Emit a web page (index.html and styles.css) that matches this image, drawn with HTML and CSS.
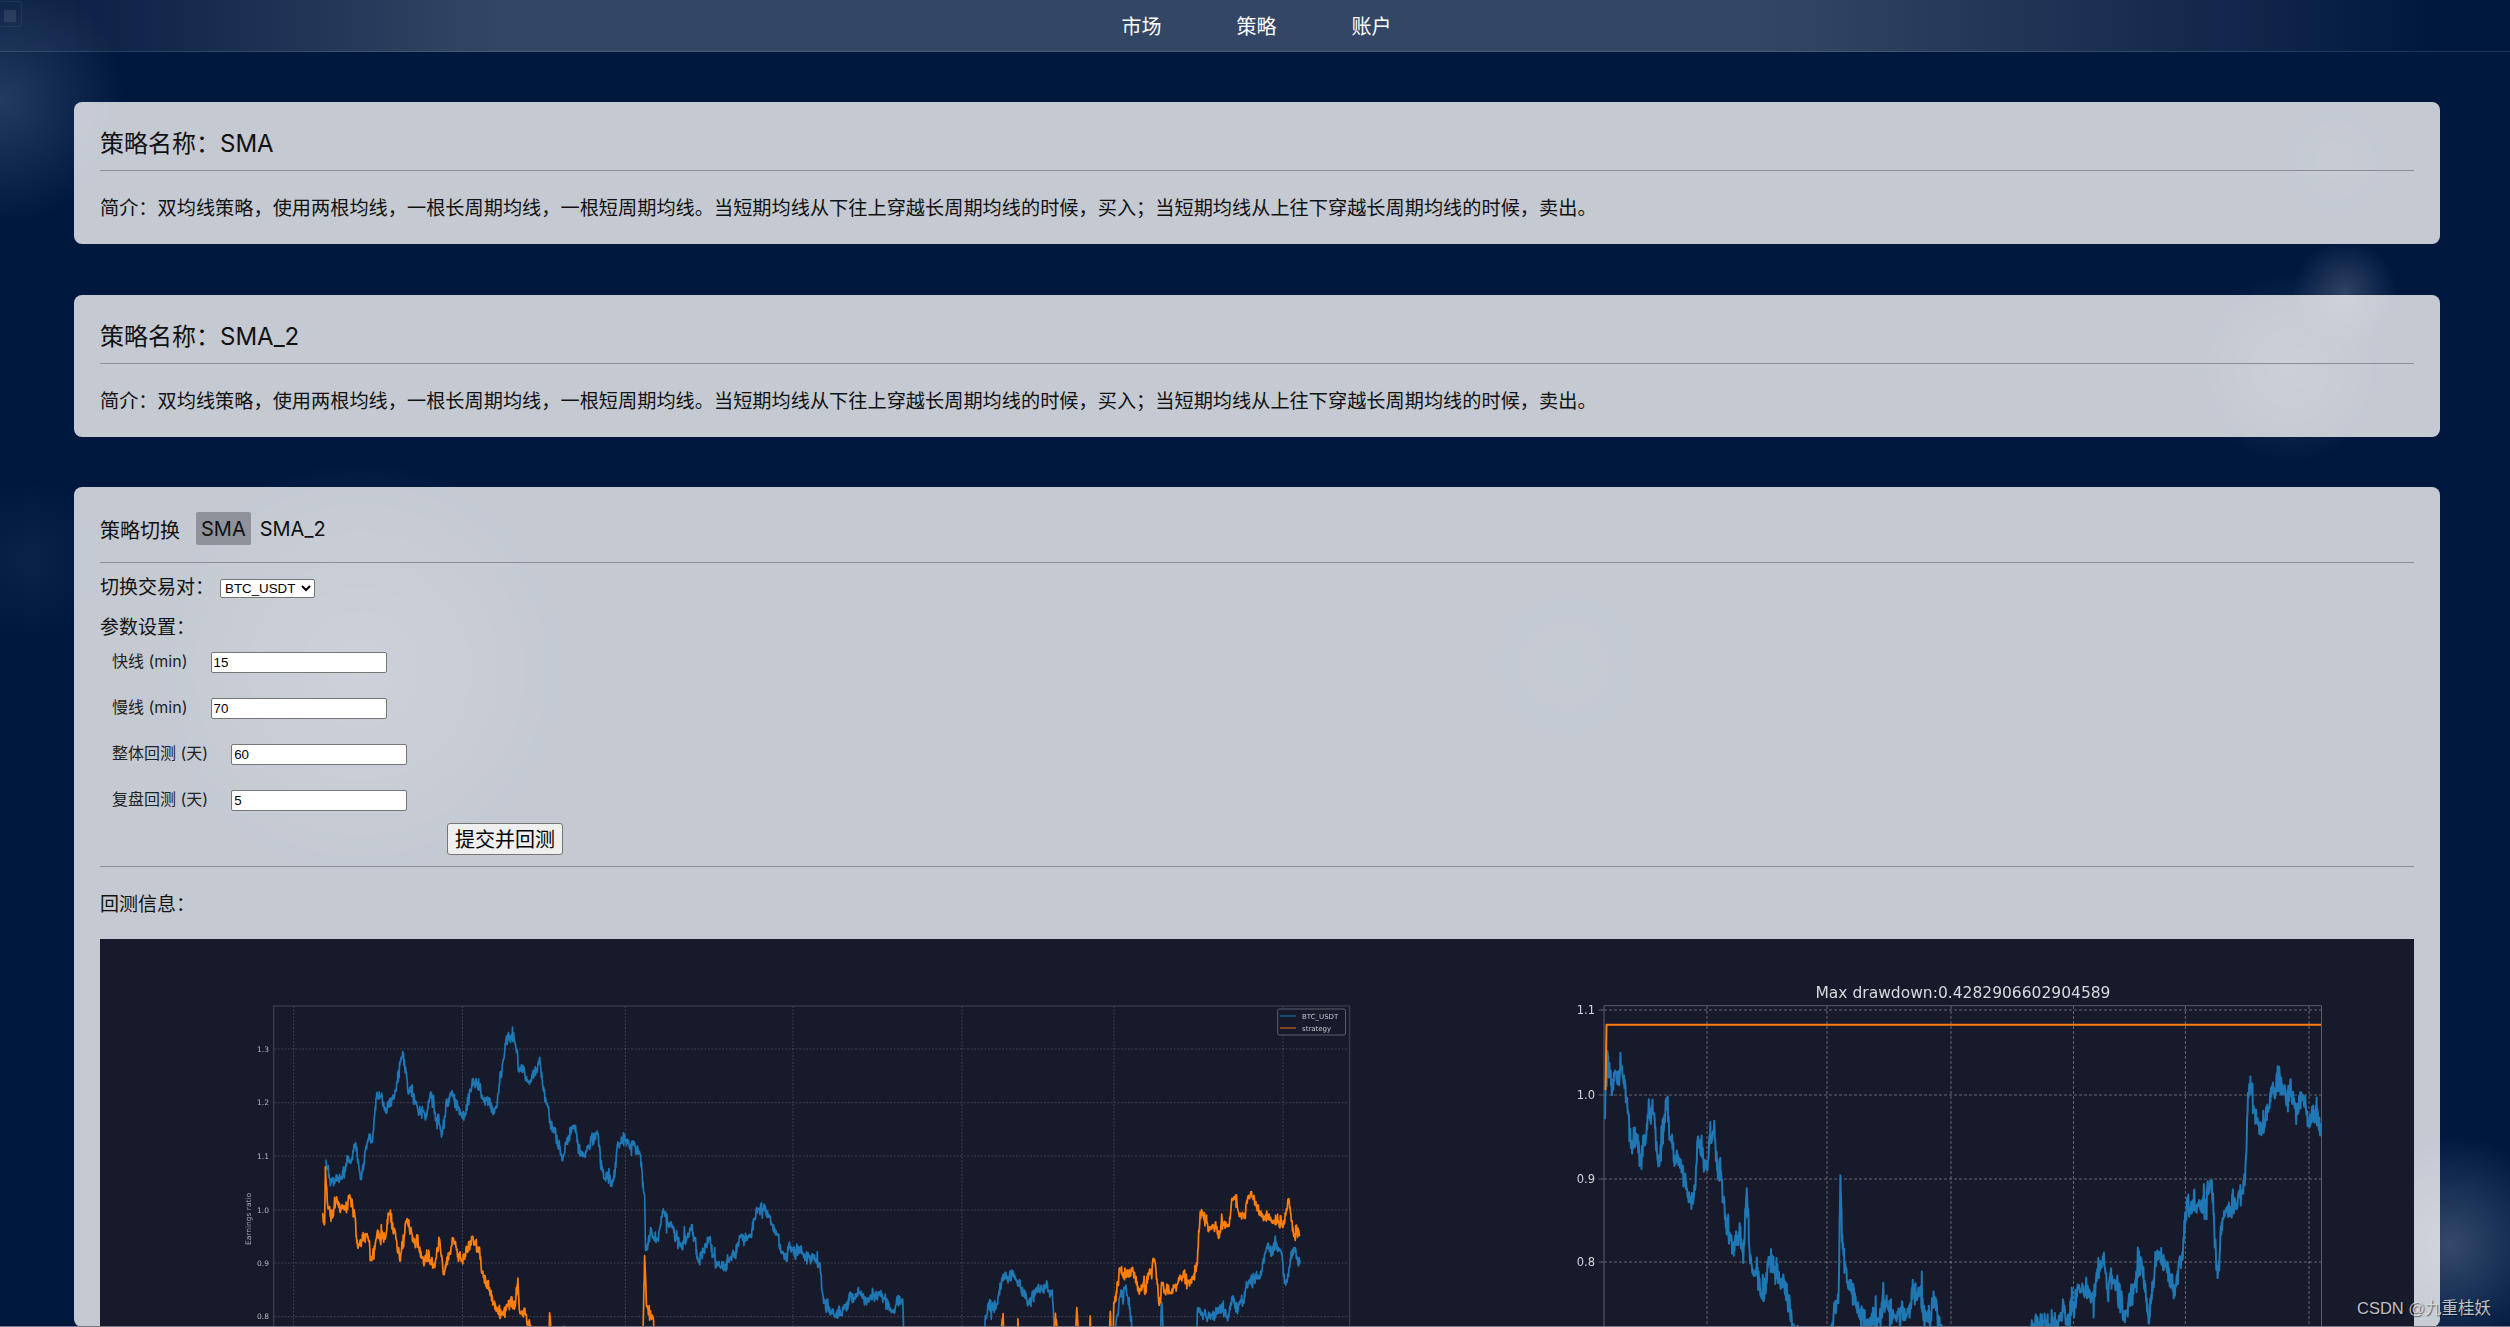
FILE: index.html
```html
<!DOCTYPE html>
<html lang="zh-CN">
<head>
<meta charset="utf-8">
<title>策略</title>
<link rel="stylesheet" href="styles.css">
</head>
<body>
<div class="page-mark"><span class="page-mark-dot"></span></div>
<nav class="topnav">
  <a class="topnav-item">市场</a>
  <a class="topnav-item">策略</a>
  <a class="topnav-item">账户</a>
</nav>
<main class="content">
  <section class="card info-card">
    <h3 class="card-title">策略名称：SMA</h3>
    <hr class="rule rule-info">
    <p class="card-text">简介：双均线策略，使用两根均线，一根长周期均线，一根短周期均线。当短期均线从下往上穿越长周期均线的时候，买入；当短期均线从上往下穿越长周期均线的时候，卖出。</p>
  </section>
  <section class="card info-card">
    <h3 class="card-title">策略名称：SMA_2</h3>
    <hr class="rule rule-info">
    <p class="card-text">简介：双均线策略，使用两根均线，一根长周期均线，一根短周期均线。当短期均线从下往上穿越长周期均线的时候，买入；当短期均线从上往下穿越长周期均线的时候，卖出。</p>
  </section>
  <section class="card run-card">
    <div class="tabs">
      <span class="tabs-label">策略切换</span>
      <span class="tab tab-active">SMA</span>
      <span class="tab">SMA_2</span>
    </div>
    <hr class="rule rule-tabs">
    <div class="pair-row">
      <label class="field-title">切换交易对：</label>
      <select class="pair-select"><option>BTC_USDT</option></select>
    </div>
    <div class="field-title params-title">参数设置：</div>
    <div class="param-list">
      <div class="param-row"><label class="param-label">快线 (min)</label><input class="param-input" value="15"></div>
      <div class="param-row"><label class="param-label">慢线 (min)</label><input class="param-input" value="70"></div>
      <div class="param-row"><label class="param-label">整体回测 (天)</label><input class="param-input" value="60"></div>
      <div class="param-row"><label class="param-label">复盘回测 (天)</label><input class="param-input" value="5"></div>
    </div>
    <div class="submit-row"><button class="submit-btn">提交并回测</button></div>
    <hr class="rule rule-submit">
    <div class="field-title result-title">回测信息：</div>
    <div class="chart-panel">
      <svg class="charts" viewBox="100 939 2308 388" width="2308" height="388" xmlns="http://www.w3.org/2000/svg">
        <g class="grid-left">
          <path d="M274 1049H1350M274 1102.7H1350M274 1156H1350M274 1210H1350M274 1263H1350M274 1316.7H1350"/>
          <path d="M293.7 1006V1340M462.5 1006V1340M625.4 1006V1340M793 1006V1340M962 1006V1340M1114 1006V1340M1283 1006V1340"/>
        </g>
        <path class="axes-left" d="M273.7 1340V1006H1349.6V1340"/>
        <g class="ticks-left">
          <text x="269" y="1051.5">1.3</text>
          <text x="269" y="1105">1.2</text>
          <text x="269" y="1158.5">1.1</text>
          <text x="269" y="1212.5">1.0</text>
          <text x="269" y="1265.5">0.9</text>
          <text x="269" y="1319">0.8</text>
        </g>
        <text class="ylabel" transform="translate(250.5 1219) rotate(-90)">Earnings ratio</text>
        <polyline id="line-left-blue" class="series series-blue"/>
        <polyline id="line-left-orange" class="series series-orange"/>
        <rect class="legend-box" x="1277.7" y="1009" width="67.8" height="26" rx="1.5"/>
        <path class="legend-blue" d="M1280 1016H1296"/>
        <path class="legend-orange" d="M1280 1028H1296"/>
        <text class="legend-text" x="1302" y="1018.5">BTC_USDT</text>
        <text class="legend-text" x="1302" y="1030.5">strategy</text>

        <g class="grid-right">
          <path d="M1604 1010H2321.5M1604 1095H2321.5M1604 1179H2321.5M1604 1262H2321.5"/>
          <path d="M1707 1006V1340M1827 1006V1340M1951 1006V1340M2073.5 1006V1340M2185.4 1006V1340M2309 1006V1340"/>
        </g>
        <path class="axes-right" d="M1604 1340V1005.7H2321.5V1340M1598.5 1010H1604M1598.5 1095H1604M1598.5 1179H1604M1598.5 1262H1604"/>
        <g class="ticks-right">
          <text x="1595" y="1014">1.1</text>
          <text x="1595" y="1099">1.0</text>
          <text x="1595" y="1183">0.9</text>
          <text x="1595" y="1266">0.8</text>
        </g>
        <text class="chart-title" x="1963" y="997.5">Max drawdown:0.4282906602904589</text>
        <polyline id="line-right-blue" class="series series-blue thick"/>
        <polyline class="series series-orange flat" points="1605.5,1090 1606.5,1024.7 2321,1024.7"/>
      </svg>
    </div>
  </section>
</main>
<div class="watermark">CSDN @九重桂妖</div>
<div class="bottom-edge"></div>
<script src="chart.js"></script>
</body>
</html>
```

FILE: styles.css
```css
* { box-sizing: border-box; }
html, body { margin: 0; height: 1327px; overflow: hidden; }
body {
  position: relative;
  color: #111;
  font-family: Inter, "Noto Sans CJK SC", "Noto Sans", sans-serif;
  background-color: #00183e;
  background-image:
    radial-gradient(circle 125px at 0 100px, rgba(150,170,200,.24), rgba(150,170,200,0)),
    radial-gradient(circle 52px at 2345px 292px, rgba(190,205,225,.24), rgba(190,205,225,0)),
    radial-gradient(circle 95px at 2290px 368px, rgba(255,255,255,.13), rgba(255,255,255,0)),
    radial-gradient(circle 60px at 2335px 160px, rgba(255,255,255,.05), rgba(255,255,255,0)),
    radial-gradient(circle 210px at 360px 670px, rgba(255,255,255,.16), rgba(255,255,255,0)),
    radial-gradient(circle 90px at 1565px 665px, rgba(255,255,255,.035), rgba(255,255,255,0)),
    radial-gradient(circle 80px at 30px 560px, rgba(150,170,200,.07), rgba(150,170,200,0)),
    radial-gradient(circle 110px at 2450px 1245px, rgba(170,190,215,.3), rgba(170,190,215,0));
}
.page-mark {
  position: absolute; left: -2px; top: 1px;
  width: 24px; height: 26px;
  border: 1px solid rgba(255,255,255,.06);
  border-radius: 3px;
}
.page-mark-dot {
  position: absolute; left: 5px; top: 8px;
  width: 12px; height: 12px;
  background: rgba(255,255,255,.09);
}
.topnav {
  height: 52px;
  display: flex;
  justify-content: center;
  align-items: center;
  gap: 75px;
  padding: 2px 0 0 3px;
  border-bottom: 1px solid rgba(255,255,255,.12);
  background: linear-gradient(90deg, rgba(255,255,255,.03) 0, rgba(255,255,255,.06) 5%, rgba(255,255,255,.2) 20%, rgba(255,255,255,.2) 70%, rgba(255,255,255,.06) 90%, rgba(255,255,255,0) 97%);
}
.topnav-item { color: #fff; font-size: 20px; line-height: 28px; }
.content { padding: 50px 70px 0 74px; }
.card {
  background: rgba(255,255,255,.77);
  border-radius: 8px;
  padding: 0 26px;
}
.info-card { height: 142px; margin-bottom: 50.5px; padding-top: 26px; }
.card-title { margin: 0; font-size: 24px; line-height: 32px; font-weight: 400; }
.rule { border: 0; height: 1px; margin: 0; background: #8c8f98; }
.rule-info { margin-top: 10px; }
.card-text { margin: 24px 0 0; font-size: 19.2px; line-height: 26px; white-space: nowrap; }
.run-card { padding-top: 25px; height: 840px; display: flex; flex-direction: column; }
.tabs { display: flex; align-items: center; height: 33px; }
.tabs-label { font-size: 20px; line-height: 28px; margin: 5px 16px 0 0; }
.tab { font-size: 20px; line-height: 31px; padding: 2px 5px 0; border-radius: 2px; }
.tab-active { background: #8f929b; margin-right: 4px; }
.rule-tabs { margin-top: 17px; }
.field-title { font-size: 19px; line-height: 26px; }
.pair-row { display: flex; align-items: center; margin-top: 12px; height: 26px; }
.pair-row .field-title { width: 120px; }
.pair-select {
  width: 95px; height: 19px; padding: 0;
  font: 13.33px "Liberation Sans", Arial, sans-serif;
  background: #fff; color: #000;
  border: 1px solid #767676; border-radius: 2px;
}
.params-title { margin-top: 14px; }
.param-list { display: flex; flex-direction: column; gap: 25px; margin-top: 11px; padding-left: 12px; }
.param-row { display: flex; align-items: center; gap: 23px; height: 21px; }
.param-label { font-size: 16px; line-height: 21px; padding-bottom: 2px; color: #222; }
.param-input {
  width: 176px; height: 21px; padding: 1px 2px;
  font: 13.33px "Liberation Sans", Arial, sans-serif;
  color: #000; background: #fff;
  border: 1px solid #767676; border-radius: 2px;
}
.submit-row { display: flex; margin-top: 12px; padding-left: 347px; }
.submit-btn {
  width: 116px; height: 32px; padding: 0;
  font: 20px/30px "Noto Sans CJK SC", sans-serif;
  color: #000; background: #efefef;
  border: 1px solid #767676; border-radius: 3px;
}
.rule-submit { margin-top: 11px; }
.result-title { margin-top: 25px; }
.chart-panel { margin-top: 21px; flex: 1; min-height: 0; overflow: hidden; background: #171a2b; }
.charts { display: block; filter: blur(.35px); }
.grid-left path { fill: none; stroke: rgba(255,255,255,.17); stroke-width: 1; stroke-dasharray: 2 1.5; }
.axes-left { fill: none; stroke: #36394a; stroke-width: 1.5; }
.ticks-left text { fill: #b4b6bd; font: 7.5px "DejaVu Sans", sans-serif; text-anchor: end; }
.ylabel { fill: #a4a6ae; font: 7.5px "DejaVu Sans", sans-serif; text-anchor: middle; }
.series { fill: none; stroke-linejoin: round; }
.series-blue { stroke: #1f77b4; stroke-width: 1.7; }
.series-orange { stroke: #ff7f0e; stroke-width: 1.7; }
.thick { stroke-width: 2; }
.flat { stroke-width: 2; }
.legend-box { fill: #171a2b; stroke: #5b5e6c; stroke-width: 1; }
.legend-blue { stroke: #1f77b4; stroke-width: 1; }
.legend-orange { stroke: #c8661a; stroke-width: 1.2; }
.legend-text { fill: #c4c5cb; font: 7px "DejaVu Sans", sans-serif; }
.grid-right path { fill: none; stroke: rgba(255,255,255,.33); stroke-width: 1; stroke-dasharray: 3 2; }
.axes-right { fill: none; stroke: #5c5e69; stroke-width: 1; }
.ticks-right text { fill: #d4d5da; font: 11.5px "DejaVu Sans", sans-serif; text-anchor: end; }
.chart-title { fill: #d8d9dd; font: 15.5px "DejaVu Sans", sans-serif; text-anchor: middle; }
.watermark {
  position: absolute; left: 2357px; top: 1298px;
  font: 16.5px/20px "Liberation Sans", "Noto Sans CJK SC", sans-serif;
  color: rgba(225,225,225,.85);
  text-shadow: 1px 1px 1px rgba(0,0,0,.55);
  white-space: nowrap;
}
.bottom-edge {
  position: absolute; left: 0; right: 0; top: 1326px;
  height: 1px; background: #777a80;
}
```

FILE: chart.js
```js
// Draws the noisy price series from anchor points, using a seeded generator so the picture is stable.
function rng(seed) {
  var s = seed * 7919 + 12345;
  return function () {
    s = (s * 16807) % 2147483647;
    return (s - 1) / 2147483646;
  };
}

function toPage(list, ox, sx, oy) {
  return list.map(function (p) { return [ox + p[0] / sx, oy + p[1] / 3]; });
}

function draw(id, anchors, amp, seed) {
  var r = rng(seed), pts = [], walk = 0;
  for (var i = 0; i < anchors.length - 1; i++) {
    var a = anchors[i], b = anchors[i + 1];
    var steps = Math.max(1, Math.round((b[0] - a[0]) / 0.4));
    for (var k = 0; k < steps; k++) {
      var t = k / steps;
      walk = walk * 0.85 + (r() - 0.5) * amp * 0.6;
      var edge = Math.min(t, 1 - t) * 2;
      var spike = r() < 0.04 ? (r() - 0.5) * amp * 2 : 0;
      var n = (walk + (r() - 0.5) * amp + spike) * (0.4 + 0.6 * edge);
      pts.push((a[0] + (b[0] - a[0]) * t).toFixed(1) + "," + (a[1] + (b[1] - a[1]) * t + n).toFixed(1));
    }
  }
  var last = anchors[anchors.length - 1];
  pts.push(last[0].toFixed(1) + "," + last[1].toFixed(1));
  document.getElementById(id).setAttribute("points", pts.join(" "));
}

var leftBlue = toPage([[505,700],[515,760],[540,735],[560,700],[572,650],[585,740],[600,630],[610,640],[620,490],[640,540],[660,490],[678,360],[690,480],[710,540],[730,560],[740,470],[765,610],[785,500],[815,550],[835,450],[860,510],[885,550],[905,380],[915,310],[932,350],[938,430],[960,450],[985,390],[1000,520],[1015,590],[1035,680],[1060,590],[1085,680],[1115,600],[1130,750],[1150,750],[1160,640],[1175,620],[1210,670],[1220,800],[1222,960],[1235,900],[1250,930],[1260,840],[1280,880],[1300,950],[1325,900],[1340,990],[1365,920],[1385,1000],[1415,990],[1435,910],[1455,930],[1470,840],[1500,860],[1515,910],[1530,970],[1550,960],[1568,970]], 100, 2.24, 930)
  .concat(toPage([[0,965],[30,985],[45,1000],[52,1100],[70,1150],[100,1130],[130,1080],[150,1110],[175,1095],[210,1140],[230,1100],[235,1300],[410,1300],[415,1150],[440,1130],[455,1050],[485,1040],[510,1120],[540,1070],[565,1080],[575,1300],[700,1300],[715,1100],[730,1070],[755,1300],[805,1300],[810,1120],[820,1300],[888,1300],[890,1150],[920,1170],[940,1130],[960,1165],[970,1100],[985,1120],[1000,1060],[1030,1045],[1045,950],[1080,970],[1088,1060],[1100,985],[1120,990]], 800, 2.24, 930));

var leftOrange = toPage([[498,840],[503,870],[505,710],[510,830],[522,860],[530,800],[545,830],[560,810],[570,850],[578,950],[600,930],[608,980],[620,910],[640,920],[647,850],[660,900],[672,990],[688,860],[700,930],[720,980],[750,1010],[760,930],[770,1040],[790,920],[810,980],[835,915],[848,960],[855,1020],[870,1080],[890,1140],[900,1160],[915,1120],[930,1130],[936,1050],[940,1150],[965,1190],[985,1300],[1000,1300],[1008,1150],[1015,1300],[1038,1300],[1040,1185],[1045,1300],[1215,1300],[1220,980],[1224,1130],[1240,1170],[1242,1300]], 100, 2.24, 930)
  .concat(toPage([[440,1300],[455,1160],[462,1300],[485,1300],[488,1170],[492,1300],[568,1300],[572,1155],[582,1300],[615,1300],[620,1140],[628,1300],[647,1300],[650,1150],[655,1300],[692,1300],[695,1150],[700,1300],[703,1130],[715,1020],[745,1020],[760,1090],[785,1030],[795,1005],[805,1120],[810,1050],[830,1090],[850,1040],[880,1050],[890,1000],[893,900],[900,840],[915,900],[960,890],[968,800],[985,860],[1008,795],[1030,850],[1060,870],[1085,880],[1095,810],[1105,915],[1120,915]], 800, 2.24, 930));

var rightBlue = toPage([[183,470],[187,280],[195,400],[200,330],[218,350],[222,440],[228,560],[240,540],[243,620],[255,520],[265,420],[275,600],[290,420],[295,560],[310,600],[325,660],[337,700],[345,530],[360,610],[372,520],[385,650],[392,760],[405,860],[425,850],[430,720],[435,880],[440,950],[455,1010],[470,890],[490,960],[510,1100],[540,1300],[580,1100],[590,1000],[593,630],[597,860],[605,980],[625,1040],[640,1100],[660,1090],[672,1020],[690,1090],[710,1050],[730,990],[745,1070],[760,1050],[770,1100],[800,1300],[920,1300],[925,1090],[975,1080],[1015,990],[1030,1010],[1050,900],[1070,950],[1090,1090],[1118,900],[1130,1090],[1145,880],[1160,900],[1175,1020],[1190,880],[1197,700],[1215,740],[1240,670],[1250,930],[1260,760],[1285,740],[1298,650],[1303,400],[1320,470],[1340,460],[1345,370],[1365,380],[1385,440],[1400,420],[1415,460],[1430,490]], 1500, 1.742, 960);

draw("line-left-blue", leftBlue, 13, 4711);
draw("line-left-orange", leftOrange, 13, 9127);
draw("line-right-blue", rightBlue, 26, 2203);
```
